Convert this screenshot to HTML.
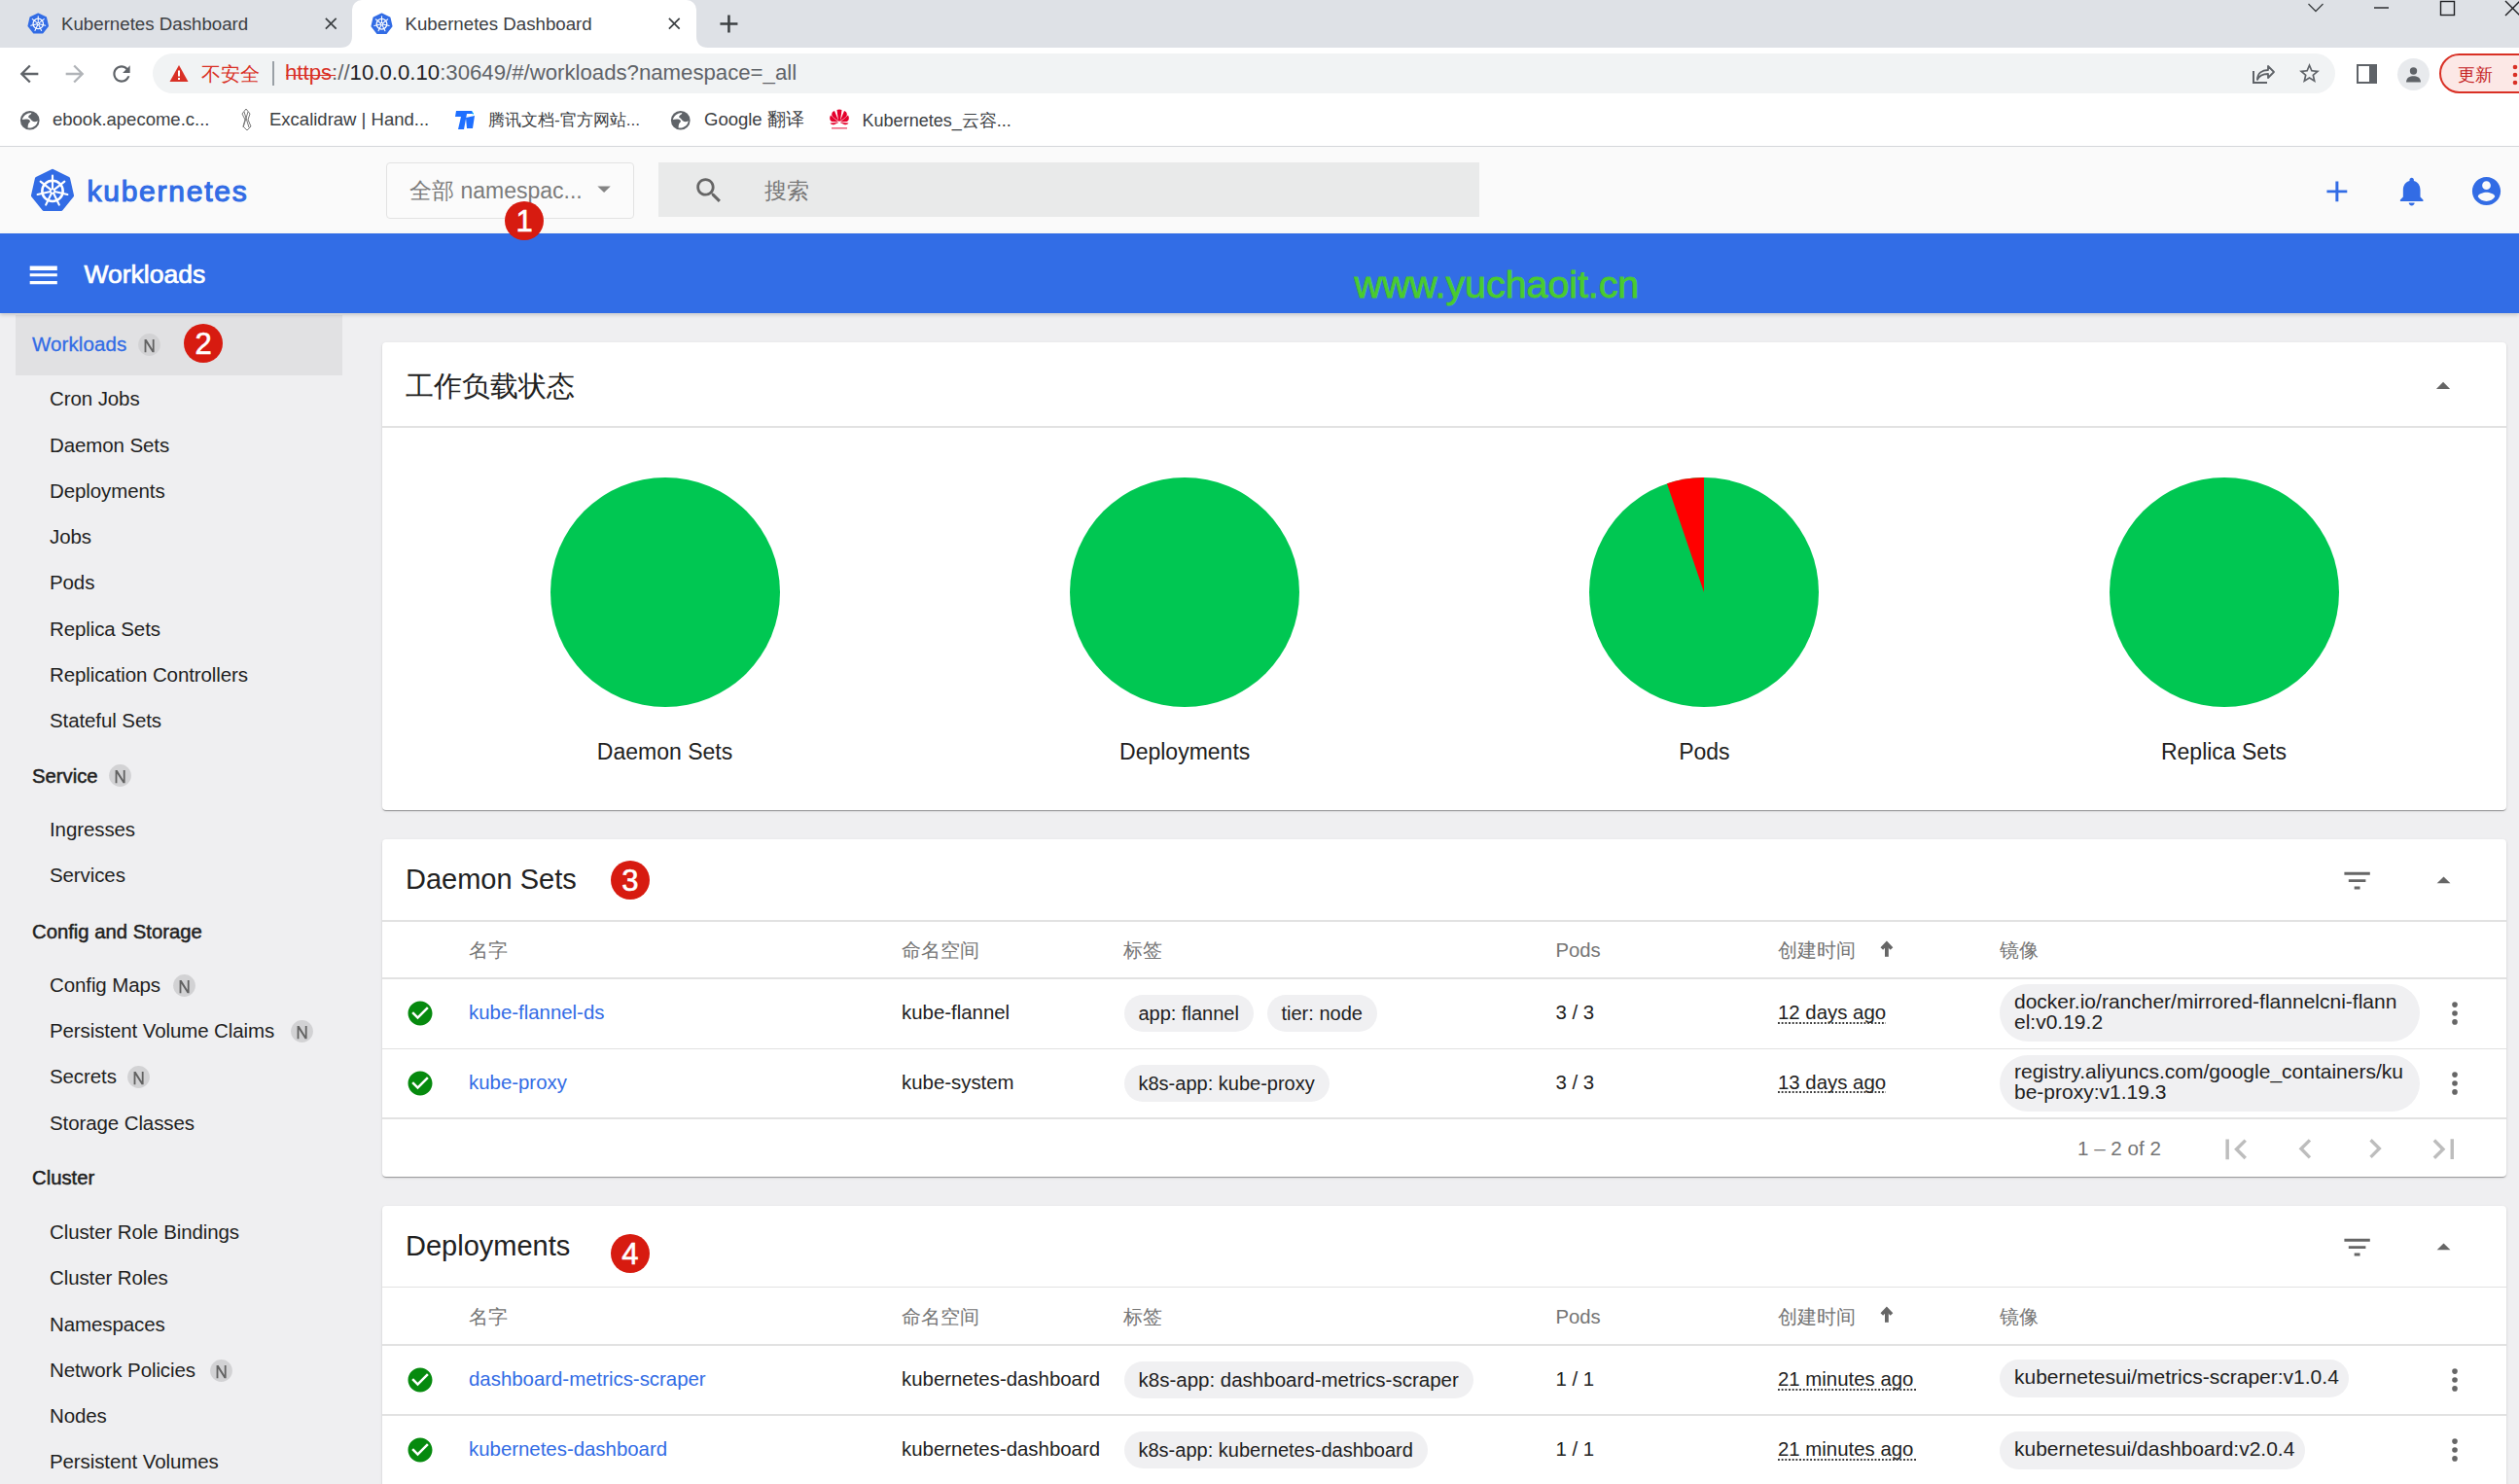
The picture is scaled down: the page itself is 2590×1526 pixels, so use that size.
<!DOCTYPE html>
<html><head><meta charset="utf-8"><title>Kubernetes Dashboard</title>
<style>
html,body{margin:0;padding:0;width:2590px;height:1526px;overflow:hidden;background:#efeff1}
body{position:relative;font-family:"Liberation Sans",sans-serif}
.r{position:absolute;display:block}
.t{position:absolute;white-space:nowrap;font-family:"Liberation Sans",sans-serif}
</style></head><body>
<div class="r" style="left:0px;top:0px;width:2590px;height:49px;background:#dee1e6"></div>
<div class="r" style="left:362px;top:0px;width:354px;height:49px;background:#fff;border-radius:10px 10px 0 0"></div>
<svg class="r" style="left:350px;top:37px" width="12" height="12" viewBox="0 0 12 12"><path d="M0 12 Q12 12 12 0 L12 12Z" fill="#fff"/></svg>
<svg class="r" style="left:716px;top:37px" width="12" height="12" viewBox="0 0 12 12"><path d="M12 12 Q0 12 0 0 L0 12Z" fill="#fff"/></svg>
<svg class="r" style="left:27.5px;top:13px;" width="22.5" height="22.5" viewBox="-4 -4 108 108"><polygon points="50.00,2.00 88.31,20.45 97.77,61.90 71.26,95.15 28.74,95.15 2.23,61.90 11.69,20.45" fill="#326ce5" stroke="#326ce5" stroke-width="8" stroke-linejoin="round"/><circle cx="50" cy="51" r="25" fill="none" stroke="#fff" stroke-width="6"/><line x1="50" y1="51" x2="50.00" y2="14.00" stroke="#fff" stroke-width="5" stroke-linecap="round"/><line x1="50" y1="51" x2="78.93" y2="27.93" stroke="#fff" stroke-width="5" stroke-linecap="round"/><line x1="50" y1="51" x2="86.07" y2="59.23" stroke="#fff" stroke-width="5" stroke-linecap="round"/><line x1="50" y1="51" x2="66.05" y2="84.34" stroke="#fff" stroke-width="5" stroke-linecap="round"/><line x1="50" y1="51" x2="33.95" y2="84.34" stroke="#fff" stroke-width="5" stroke-linecap="round"/><line x1="50" y1="51" x2="13.93" y2="59.23" stroke="#fff" stroke-width="5" stroke-linecap="round"/><line x1="50" y1="51" x2="21.07" y2="27.93" stroke="#fff" stroke-width="5" stroke-linecap="round"/><circle cx="50" cy="51" r="7" fill="#fff"/><circle cx="50" cy="51" r="3" fill="#326ce5"/></svg>
<div class="t" style="left:63px;top:16.37px;font-size:18.7px;line-height:18.7px;color:#3c4043;font-weight:400;">Kubernetes Dashboard</div>
<svg class="r" style="left:329.71px;top:13.71px;" width="20.57" height="20.57" viewBox="0 0 24 24"><path fill="#3c4043" d="M19 6.41L17.59 5 12 10.59 6.41 5 5 6.41 10.59 12 5 17.59 6.41 19 12 13.41 17.59 19 19 17.59 13.41 12z"/></svg>
<svg class="r" style="left:380.5px;top:13px;" width="23" height="23" viewBox="-4 -4 108 108"><polygon points="50.00,2.00 88.31,20.45 97.77,61.90 71.26,95.15 28.74,95.15 2.23,61.90 11.69,20.45" fill="#326ce5" stroke="#326ce5" stroke-width="8" stroke-linejoin="round"/><circle cx="50" cy="51" r="25" fill="none" stroke="#fff" stroke-width="6"/><line x1="50" y1="51" x2="50.00" y2="14.00" stroke="#fff" stroke-width="5" stroke-linecap="round"/><line x1="50" y1="51" x2="78.93" y2="27.93" stroke="#fff" stroke-width="5" stroke-linecap="round"/><line x1="50" y1="51" x2="86.07" y2="59.23" stroke="#fff" stroke-width="5" stroke-linecap="round"/><line x1="50" y1="51" x2="66.05" y2="84.34" stroke="#fff" stroke-width="5" stroke-linecap="round"/><line x1="50" y1="51" x2="33.95" y2="84.34" stroke="#fff" stroke-width="5" stroke-linecap="round"/><line x1="50" y1="51" x2="13.93" y2="59.23" stroke="#fff" stroke-width="5" stroke-linecap="round"/><line x1="50" y1="51" x2="21.07" y2="27.93" stroke="#fff" stroke-width="5" stroke-linecap="round"/><circle cx="50" cy="51" r="7" fill="#fff"/><circle cx="50" cy="51" r="3" fill="#326ce5"/></svg>
<div class="t" style="left:416.5px;top:15.97px;font-size:18.7px;line-height:18.7px;color:#3c4043;font-weight:400;">Kubernetes Dashboard</div>
<svg class="r" style="left:682.71px;top:13.71px;" width="20.57" height="20.57" viewBox="0 0 24 24"><path fill="#3c4043" d="M19 6.41L17.59 5 12 10.59 6.41 5 5 6.41 10.59 12 5 17.59 6.41 19 12 13.41 17.59 19 19 17.59 13.41 12z"/></svg>
<svg class="r" style="left:734.07px;top:8.57px;" width="30.86" height="30.86" viewBox="0 0 24 24"><path fill="#3c4043" d="M19 13h-6v6h-2v-6H5v-2h6V5h2v6h6v2z"/></svg>
<svg class="r" style="left:2370px;top:0px" width="220" height="20" viewBox="0 0 220 20"><polyline points="3.5,4 11,11.5 18.5,4" fill="none" stroke="#3c4043" stroke-width="1.3"/><line x1="71" y1="8" x2="86" y2="8" stroke="#202124" stroke-width="1.4"/><rect x="139.5" y="1.5" width="14" height="14" fill="none" stroke="#202124" stroke-width="1.4"/><line x1="206" y1="1" x2="221" y2="16" stroke="#202124" stroke-width="1.4"/><line x1="206" y1="16" x2="221" y2="1" stroke="#202124" stroke-width="1.4"/></svg>
<div class="r" style="left:0px;top:49px;width:2590px;height:101px;background:#fff"></div>
<svg class="r" style="left:16px;top:61.5px" width="28" height="28" viewBox="0 0 24 24"><path d="M20 11H7.83l5.59-5.59L12 4l-8 8 8 8 1.41-1.41L7.83 13H20v-2z" fill="#5f6368"/></svg>
<svg class="r" style="left:63px;top:61.5px" width="28" height="28" viewBox="0 0 24 24"><path d="M12 4l-1.41 1.41L16.17 11H4v2h12.17l-5.58 5.59L12 20l8-8z" fill="#b1b4b8"/></svg>
<svg class="r" style="left:112px;top:63px" width="26" height="26" viewBox="0 0 24 24"><path d="M17.65 6.35C16.2 4.9 14.21 4 12 4c-4.42 0-7.99 3.58-7.99 8s3.57 8 7.99 8c3.73 0 6.84-2.55 7.73-6h-2.08c-.82 2.33-3.04 4-5.65 4-3.31 0-6-2.69-6-6s2.69-6 6-6c1.66 0 3.14.69 4.22 1.78L13 11h7V4l-2.35 2.35z" fill="#5f6368"/></svg>
<div class="r" style="left:157px;top:55px;width:2244px;height:41px;background:#f1f3f4;border-radius:21px"></div>
<svg class="r" style="left:174px;top:66px" width="20" height="19" viewBox="0 0 20 19"><path d="M10 1 L19.5 18 L0.5 18 Z" fill="#d93025"/><rect x="9" y="6.5" width="2" height="6" fill="#fff"/><rect x="9" y="14" width="2" height="2" fill="#fff"/></svg>
<div class="t" style="left:207px;top:65.82px;font-size:20.3px;line-height:20.3px;color:#d93025;font-weight:400;">不安全</div>
<div class="r" style="left:280px;top:63px;width:1.5px;height:25px;background:#9aa0a6"></div>
<div class="r" style="left:294px;top:76.6px;width:50.5px;height:1.6px;background:#d93025;z-index:2"></div>
<div class="t" style="left:293px;top:63.61px;font-size:22.2px;line-height:22.2px;color:#202124;font-weight:400;"><span style="color:#d93025">https</span><span style="color:#5f6368">://</span><span style="color:#202124">10.0.0.10</span><span style="color:#5f6368">:30649/#/workloads?namespace=_all</span></div>
<svg class="r" style="left:2314px;top:64px" width="26" height="24" viewBox="0 0 26 24"><path d="M3 9 V21 H17" fill="none" stroke="#5f6368" stroke-width="2"/><path d="M7 18 C7 11 12 8 18 8 V4 L24 10 L18 16 V12 C13 12 9 13.5 7 18Z" fill="none" stroke="#5f6368" stroke-width="1.8" stroke-linejoin="round"/></svg>
<svg class="r" style="left:2362px;top:63px" width="25" height="25" viewBox="0 0 24 24"><path d="M22 9.24l-7.19-.62L12 2 9.19 8.63 2 9.24l5.46 4.73L5.82 21 12 17.27 18.18 21l-1.63-7.03L22 9.24zM12 15.4l-3.76 2.27 1-4.28-3.32-2.88 4.38-.38L12 6.1l1.71 4.04 4.38.38-3.32 2.88 1 4.28L12 15.4z" fill="#5f6368"/></svg>
<div class="r" style="left:2423px;top:65.5px;width:21px;height:20.5px;box-sizing:border-box;border:2.6px solid #5f6368;border-right-width:8px;background:#fff"></div>
<div class="r" style="left:2465px;top:60px;width:33px;height:33px;background:#e8eaed;border-radius:50%"></div>
<svg class="r" style="left:2471px;top:66px" width="21" height="21" viewBox="0 0 24 24"><circle cx="12" cy="8" r="4.2" fill="#5f6368"/><path d="M3.5 21 C3.5 15.5 8 14 12 14 C16 14 20.5 15.5 20.5 21Z" fill="#5f6368"/></svg>
<div class="r" style="left:2508px;top:55px;width:110px;height:41px;box-sizing:border-box;border:2px solid #d93025;border-radius:21px;background:#fce8e6"></div>
<div class="t" style="left:2527px;top:69.19px;font-size:17.5px;line-height:17.5px;color:#c5221f;font-weight:400;">更新</div>
<svg class="r" style="left:2582px;top:66px" width="8" height="22" viewBox="0 0 8 22"><circle cx="4" cy="3" r="2.3" fill="#d93025"/><circle cx="4" cy="11" r="2.3" fill="#d93025"/><circle cx="4" cy="19" r="2.3" fill="#d93025"/></svg>
<svg class="r" style="left:19.5px;top:112.5px;" width="21.5" height="21.5" viewBox="0 0 24 24"><circle cx="12" cy="12" r="11" fill="#5f6368"/><path d="M13.8 3.3 C8.8 3.2 4.3 6.6 3.2 11.2 C5.5 10.6 8.6 10.3 10.8 11.2 C12.6 12 12.6 13.6 11.4 14.6 C10.2 15.6 9.6 17.2 9.6 20.6 C15.2 21.6 20.4 17.8 20.9 12.6 C19 13.8 16.4 14 14.6 12.6 C13.2 11.6 12.8 10.2 11.6 9.6 C10.2 8.8 9.8 7.6 10.8 6.6 C11.8 5.6 13.6 5.2 13.8 3.3Z" fill="#fff"/></svg>
<div class="t" style="left:54px;top:114.44px;font-size:18.5px;line-height:18.5px;color:#3c4043;font-weight:400;">ebook.apecome.c...</div>
<svg class="r" style="left:246px;top:111px" width="14" height="24" viewBox="0 0 14 24"><path d="M7 1 L11 6 L9 12 L12 19 L8 23 L4 19 L6 12 L3 6Z M5 4 L10 20 M9 4 L4 20" fill="none" stroke="#777" stroke-width="1"/></svg>
<div class="t" style="left:277px;top:114.44px;font-size:18.5px;line-height:18.5px;color:#3c4043;font-weight:400;">Excalidraw | Hand...</div>
<svg class="r" style="left:465px;top:112px" width="24" height="22" viewBox="0 0 24 22"><path d="M4 2 H20 L22 5 H15 L12 21 H6 L9 8 H3Z" fill="#1e6fff"/><path d="M14 9 L23 7 L21 20 H15Z" fill="#1e6fff"/><path d="M20 2 L22 5 L21 6Z" fill="#00d4ff"/></svg>
<div class="t" style="left:502px;top:115.46px;font-size:17.3px;line-height:17.3px;color:#3c4043;font-weight:400;">腾讯文档-官方网站...</div>
<svg class="r" style="left:689px;top:112.5px;" width="21.5" height="21.5" viewBox="0 0 24 24"><circle cx="12" cy="12" r="11" fill="#5f6368"/><path d="M13.8 3.3 C8.8 3.2 4.3 6.6 3.2 11.2 C5.5 10.6 8.6 10.3 10.8 11.2 C12.6 12 12.6 13.6 11.4 14.6 C10.2 15.6 9.6 17.2 9.6 20.6 C15.2 21.6 20.4 17.8 20.9 12.6 C19 13.8 16.4 14 14.6 12.6 C13.2 11.6 12.8 10.2 11.6 9.6 C10.2 8.8 9.8 7.6 10.8 6.6 C11.8 5.6 13.6 5.2 13.8 3.3Z" fill="#fff"/></svg>
<div class="t" style="left:724px;top:114.44px;font-size:18.5px;line-height:18.5px;color:#3c4043;font-weight:400;">Google 翻译</div>
<svg class="r" style="left:851px;top:111px" width="24" height="24" viewBox="0 0 24 24"><g fill="#e4002b"><path d="M11.5 14 L7 3 C4 4 3.5 7 5 9Z"/><path d="M12.5 14 L17 3 C20 4 20.5 7 19 9Z"/><path d="M11 14.5 L3 7.5 C1.5 10 2 12.5 4 14Z"/><path d="M13 14.5 L21 7.5 C22.5 10 22 12.5 20 14Z"/><path d="M11.3 15 L2.5 15.5 C3.5 17 5 17.5 7 17Z"/><path d="M12.7 15 L21.5 15.5 C20.5 17 19 17.5 17 17Z"/><path d="M11 13.5 L9.5 2 C11 1.2 13 1.2 14.5 2 L13 13.5Z"/></g><rect x="4" y="20" width="16" height="1.6" fill="#e4002b" opacity=".6"/></svg>
<div class="t" style="left:886.6px;top:114.86px;font-size:18px;line-height:18px;color:#3c4043;font-weight:400;">Kubernetes_云容...</div>
<div class="r" style="left:0px;top:149.5px;width:2590px;height:1.5px;background:#d5d7da"></div>
<div class="r" style="left:0px;top:151px;width:2590px;height:89px;background:#fafafa"></div>
<svg class="r" style="left:31px;top:173px;" width="46" height="46" viewBox="-4 -4 108 108"><polygon points="50.00,2.00 88.31,20.45 97.77,61.90 71.26,95.15 28.74,95.15 2.23,61.90 11.69,20.45" fill="#326ce5" stroke="#326ce5" stroke-width="8" stroke-linejoin="round"/><circle cx="50" cy="51" r="25" fill="none" stroke="#fff" stroke-width="6"/><line x1="50" y1="51" x2="50.00" y2="14.00" stroke="#fff" stroke-width="5" stroke-linecap="round"/><line x1="50" y1="51" x2="78.93" y2="27.93" stroke="#fff" stroke-width="5" stroke-linecap="round"/><line x1="50" y1="51" x2="86.07" y2="59.23" stroke="#fff" stroke-width="5" stroke-linecap="round"/><line x1="50" y1="51" x2="66.05" y2="84.34" stroke="#fff" stroke-width="5" stroke-linecap="round"/><line x1="50" y1="51" x2="33.95" y2="84.34" stroke="#fff" stroke-width="5" stroke-linecap="round"/><line x1="50" y1="51" x2="13.93" y2="59.23" stroke="#fff" stroke-width="5" stroke-linecap="round"/><line x1="50" y1="51" x2="21.07" y2="27.93" stroke="#fff" stroke-width="5" stroke-linecap="round"/><circle cx="50" cy="51" r="7" fill="#fff"/><circle cx="50" cy="51" r="3" fill="#326ce5"/></svg>
<div class="t" style="left:89.5px;top:181.50px;font-size:30px;line-height:30px;color:#326ce5;font-weight:400;letter-spacing:1.75px;-webkit-text-stroke:1.1px #326ce5">kubernetes</div>
<div class="r" style="left:397px;top:167px;width:255px;height:58px;box-sizing:border-box;border:1.5px solid #e3e3e3;border-radius:4px;background:#fbfbfb"></div>
<div class="t" style="left:421px;top:185.13px;font-size:23px;line-height:23px;color:#7b7b7b;font-weight:400;">全部 namespac...</div>
<svg class="r" style="left:604.62px;top:178.3px;" width="32.16" height="32.16" viewBox="0 0 24 24"><path fill="#848484" d="M7 10l5 5 5-5z"/></svg>
<div class="r" style="left:677px;top:167.2px;width:844px;height:56px;background:#e9eaea"></div>
<svg class="r" style="left:712.26px;top:179.46px;" width="33.89" height="33.89" viewBox="0 0 24 24"><path fill="#666" d="M15.5 14h-.79l-.28-.27C15.41 12.59 16 11.11 16 9.5 16 5.91 13.09 3 9.5 3S3 5.91 3 9.5 5.91 16 9.5 16c1.61 0 3.090-.59 4.23-1.57l.27.28v.79l5 4.99L20.49 19l-4.99-5zm-6 0C7.01 14 5 11.99 5 9.5S7.01 5 9.5 5 14 7.01 14 9.5 11.99 14 9.5 14z"/></svg>
<div class="t" style="left:786px;top:185.13px;font-size:23px;line-height:23px;color:#797979;font-weight:400;">搜索</div>
<svg class="r" style="left:2385.15px;top:179.25px;" width="35.74" height="35.74" viewBox="0 0 24 24"><path fill="#326ce5" d="M19 13h-6v6h-2v-6H5v-2h6V5h2v6h6v2z"/></svg>
<svg class="r" style="left:2461.91px;top:179.12px;" width="35.35" height="35.35" viewBox="0 0 24 24"><path fill="#326ce5" d="M12 22c1.1 0 2-.9 2-2h-4c0 1.1.89 2 2 2zm6-6v-5c0-3.07-1.64-5.64-4.5-6.32V4c0-.83-.67-1.5-1.5-1.5s-1.5.67-1.5 1.5v.68C7.63 5.36 6 7.92 6 11v5l-2 2v1h16v-1l-2-2z"/></svg>
<svg class="r" style="left:2539.08px;top:178.88px;" width="35.04" height="35.04" viewBox="0 0 24 24"><path fill="#326ce5" d="M12 2C6.48 2 2 6.48 2 12s4.48 10 10 10 10-4.48 10-10S17.52 2 12 2zm0 3c1.66 0 3 1.34 3 3s-1.34 3-3 3-3-1.34-3-3 1.34-3 3-3zm0 14.2c-2.5 0-4.71-1.28-6-3.22.03-1.99 4-3.08 6-3.08 1.99 0 5.97 1.09 6 3.08-1.29 1.94-3.5 3.22-6 3.22z"/></svg>
<div class="r" style="left:0px;top:240px;width:2590px;height:82px;background:#326de6;box-shadow:0 2px 4px rgba(0,0,0,.16);z-index:2"></div>
<svg class="r" style="left:26.01px;top:264.02px;z-index:3" width="37.5" height="37.5" viewBox="0 0 24 24"><path fill="#fff" d="M3 18h18v-2H3v2zm0-5h18v-2H3v2zm0-6v2h18V6H3z"/></svg>
<div class="t" style="left:86.5px;top:269.17px;font-size:26.5px;line-height:26.5px;color:#fff;font-weight:400;-webkit-text-stroke:0.7px #fff;z-index:3">Workloads</div>
<div class="t" style="left:1392.5px;top:272.56px;font-size:39.5px;line-height:39.5px;color:#4acb2f;font-weight:400;letter-spacing:-0.1px;-webkit-text-stroke:0.8px #4acb2f;z-index:3">www.yuchaoit.cn</div>
<div class="r" style="left:15.5px;top:323.5px;width:336.5px;height:62.5px;background:#e1e1e3"></div>
<div class="t" style="left:33px;top:344.45px;font-size:20.5px;line-height:20.5px;color:#326ce5;font-weight:400;letter-spacing:0.1px;-webkit-text-stroke:0.3px #326ce5">Workloads</div>
<svg class="r" style="left:142px;top:343px" width="23" height="23" viewBox="0 0 23 23"><circle cx="11.5" cy="11.5" r="11.4" fill="#d2d2d4"/><path d="M6.6 19.3V6.1H8.6L14.8 15.9V6.1H16.6V19.3H14.6L8.4 9.5V19.3Z" fill="#626262"/></svg>
<div class="t" style="left:189px;top:333px;width:40px;height:40px;border-radius:50%;background:#d71b10;text-align:center;line-height:41px;font-size:31px;color:#fff;-webkit-text-stroke:0.6px #fff;z-index:3">2</div>
<div class="t" style="left:51px;top:400.35px;font-size:20.5px;line-height:20.5px;color:#1f1f1f;font-weight:400;letter-spacing:-0.1px">Cron Jobs</div>
<div class="t" style="left:51px;top:447.65px;font-size:20.5px;line-height:20.5px;color:#1f1f1f;font-weight:400;letter-spacing:-0.1px">Daemon Sets</div>
<div class="t" style="left:51px;top:494.85px;font-size:20.5px;line-height:20.5px;color:#1f1f1f;font-weight:400;letter-spacing:-0.1px">Deployments</div>
<div class="t" style="left:51px;top:542.05px;font-size:20.5px;line-height:20.5px;color:#1f1f1f;font-weight:400;letter-spacing:-0.1px">Jobs</div>
<div class="t" style="left:51px;top:589.25px;font-size:20.5px;line-height:20.5px;color:#1f1f1f;font-weight:400;letter-spacing:-0.1px">Pods</div>
<div class="t" style="left:51px;top:636.55px;font-size:20.5px;line-height:20.5px;color:#1f1f1f;font-weight:400;letter-spacing:-0.1px">Replica Sets</div>
<div class="t" style="left:51px;top:683.75px;font-size:20.5px;line-height:20.5px;color:#1f1f1f;font-weight:400;letter-spacing:-0.1px">Replication Controllers</div>
<div class="t" style="left:51px;top:731.15px;font-size:20.5px;line-height:20.5px;color:#1f1f1f;font-weight:400;letter-spacing:-0.1px">Stateful Sets</div>
<div class="t" style="left:51px;top:843.05px;font-size:20.5px;line-height:20.5px;color:#1f1f1f;font-weight:400;letter-spacing:-0.1px">Ingresses</div>
<div class="t" style="left:51px;top:890.25px;font-size:20.5px;line-height:20.5px;color:#1f1f1f;font-weight:400;letter-spacing:-0.1px">Services</div>
<div class="t" style="left:51px;top:1002.95px;font-size:20.5px;line-height:20.5px;color:#1f1f1f;font-weight:400;letter-spacing:-0.1px">Config Maps</div>
<div class="t" style="left:51px;top:1050.25px;font-size:20.5px;line-height:20.5px;color:#1f1f1f;font-weight:400;letter-spacing:-0.1px">Persistent Volume Claims</div>
<div class="t" style="left:51px;top:1097.45px;font-size:20.5px;line-height:20.5px;color:#1f1f1f;font-weight:400;letter-spacing:-0.1px">Secrets</div>
<div class="t" style="left:51px;top:1144.65px;font-size:20.5px;line-height:20.5px;color:#1f1f1f;font-weight:400;letter-spacing:-0.1px">Storage Classes</div>
<div class="t" style="left:51px;top:1257.15px;font-size:20.5px;line-height:20.5px;color:#1f1f1f;font-weight:400;letter-spacing:-0.1px">Cluster Role Bindings</div>
<div class="t" style="left:51px;top:1304.45px;font-size:20.5px;line-height:20.5px;color:#1f1f1f;font-weight:400;letter-spacing:-0.1px">Cluster Roles</div>
<div class="t" style="left:51px;top:1351.65px;font-size:20.5px;line-height:20.5px;color:#1f1f1f;font-weight:400;letter-spacing:-0.1px">Namespaces</div>
<div class="t" style="left:51px;top:1398.95px;font-size:20.5px;line-height:20.5px;color:#1f1f1f;font-weight:400;letter-spacing:-0.1px">Network Policies</div>
<div class="t" style="left:51px;top:1446.15px;font-size:20.5px;line-height:20.5px;color:#1f1f1f;font-weight:400;letter-spacing:-0.1px">Nodes</div>
<div class="t" style="left:51px;top:1493.25px;font-size:20.5px;line-height:20.5px;color:#1f1f1f;font-weight:400;letter-spacing:-0.1px">Persistent Volumes</div>
<div class="t" style="left:33px;top:787.82px;font-size:20.3px;line-height:20.3px;color:#1f1f1f;font-weight:400;-webkit-text-stroke:0.5px #1f1f1f">Service</div>
<div class="t" style="left:33px;top:947.52px;font-size:20.3px;line-height:20.3px;color:#1f1f1f;font-weight:400;-webkit-text-stroke:0.5px #1f1f1f">Config and Storage</div>
<div class="t" style="left:33px;top:1201.32px;font-size:20.3px;line-height:20.3px;color:#1f1f1f;font-weight:400;-webkit-text-stroke:0.5px #1f1f1f">Cluster</div>
<svg class="r" style="left:112px;top:786px" width="23" height="23" viewBox="0 0 23 23"><circle cx="11.5" cy="11.5" r="11.4" fill="#d2d2d4"/><path d="M6.6 19.3V6.1H8.6L14.8 15.9V6.1H16.6V19.3H14.6L8.4 9.5V19.3Z" fill="#626262"/></svg>
<svg class="r" style="left:177.8px;top:1001.6px" width="23" height="23" viewBox="0 0 23 23"><circle cx="11.5" cy="11.5" r="11.4" fill="#d2d2d4"/><path d="M6.6 19.3V6.1H8.6L14.8 15.9V6.1H16.6V19.3H14.6L8.4 9.5V19.3Z" fill="#626262"/></svg>
<svg class="r" style="left:298.7px;top:1048.8px" width="23" height="23" viewBox="0 0 23 23"><circle cx="11.5" cy="11.5" r="11.4" fill="#d2d2d4"/><path d="M6.6 19.3V6.1H8.6L14.8 15.9V6.1H16.6V19.3H14.6L8.4 9.5V19.3Z" fill="#626262"/></svg>
<svg class="r" style="left:131.3px;top:1096px" width="23" height="23" viewBox="0 0 23 23"><circle cx="11.5" cy="11.5" r="11.4" fill="#d2d2d4"/><path d="M6.6 19.3V6.1H8.6L14.8 15.9V6.1H16.6V19.3H14.6L8.4 9.5V19.3Z" fill="#626262"/></svg>
<svg class="r" style="left:215.6px;top:1397.6px" width="23" height="23" viewBox="0 0 23 23"><circle cx="11.5" cy="11.5" r="11.4" fill="#d2d2d4"/><path d="M6.6 19.3V6.1H8.6L14.8 15.9V6.1H16.6V19.3H14.6L8.4 9.5V19.3Z" fill="#626262"/></svg>
<div class="r" style="left:393px;top:352px;width:2184px;height:481px;background:#fff;border-radius:4px;box-shadow:0 2px 1px -1px rgba(0,0,0,.2),0 1px 1px 0 rgba(0,0,0,.14),0 1px 3px 0 rgba(0,0,0,.12)"></div>
<div class="t" style="left:417px;top:383.24px;font-size:29.25px;line-height:29.25px;color:#212121;font-weight:400;">工作负载状态</div>
<svg class="r" style="left:2495.06px;top:379.92px;" width="34.08" height="34.08" viewBox="0 0 24 24"><path fill="#666" d="M7 14l5-5 5 5z"/></svg>
<div class="r" style="left:393px;top:438px;width:2184px;height:1.5px;background:#e2e2e2"></div>
<svg class="r" style="left:565.5px;top:491.20000000000005px;" width="236" height="236" viewBox="0 0 236 236"><circle cx="118" cy="118" r="118" fill="#00c752"/></svg>
<div class="t" style="left:533.5px;width:300px;text-align:center;top:761.53px;font-size:23px;line-height:23px;color:#212121">Daemon Sets</div>
<svg class="r" style="left:1100.2px;top:491.20000000000005px;" width="236" height="236" viewBox="0 0 236 236"><circle cx="118" cy="118" r="118" fill="#00c752"/></svg>
<div class="t" style="left:1068.2px;width:300px;text-align:center;top:761.53px;font-size:23px;line-height:23px;color:#212121">Deployments</div>
<svg class="r" style="left:1634.4px;top:491.20000000000005px;" width="236" height="236" viewBox="0 0 236 236"><circle cx="118" cy="118" r="118" fill="#00c752"/><path d="M118 118 L118 0 A118 118 0 0 0 79.97 6.30 Z" fill="#ff0000"/></svg>
<div class="t" style="left:1602.4px;width:300px;text-align:center;top:761.53px;font-size:23px;line-height:23px;color:#212121">Pods</div>
<svg class="r" style="left:2168.5px;top:491.20000000000005px;" width="236" height="236" viewBox="0 0 236 236"><circle cx="118" cy="118" r="118" fill="#00c752"/></svg>
<div class="t" style="left:2136.5px;width:300px;text-align:center;top:761.53px;font-size:23px;line-height:23px;color:#212121">Replica Sets</div>
<div class="r" style="left:393px;top:863.3px;width:2184px;height:346.4000000000001px;background:#fff;border-radius:4px;box-shadow:0 2px 1px -1px rgba(0,0,0,.2),0 1px 1px 0 rgba(0,0,0,.14),0 1px 3px 0 rgba(0,0,0,.12)"></div>
<div class="t" style="left:417px;top:889.95px;font-size:29px;line-height:29px;color:#212121;font-weight:400;">Daemon Sets</div><div class="t" style="left:627.8px;top:884.9px;width:40px;height:40px;border-radius:50%;background:#d71b10;text-align:center;line-height:41px;font-size:31px;color:#fff;-webkit-text-stroke:0.6px #fff;z-index:3">3</div><svg class="r" style="left:2406.0px;top:888.2px;" width="35.2" height="35.2" viewBox="0 0 24 24"><path fill="#666" d="M10 18h4v-2h-4v2zM3 6v2h18V6H3zm3 7h12v-2H6v2z"/></svg><svg class="r" style="left:2495.74px;top:889.28px;" width="33.12" height="33.12" viewBox="0 0 24 24"><path fill="#666" d="M7 14l5-5 5 5z"/></svg>
<div class="r" style="left:393px;top:946.0px;width:2184px;height:1.5px;background:#e2e2e2"></div><div class="t" style="left:482px;top:966.92px;font-size:20.3px;line-height:20.3px;color:#757575;font-weight:400;">名字</div><div class="t" style="left:927px;top:966.92px;font-size:20.3px;line-height:20.3px;color:#757575;font-weight:400;">命名空间</div><div class="t" style="left:1155px;top:966.92px;font-size:20.3px;line-height:20.3px;color:#757575;font-weight:400;">标签</div><div class="t" style="left:1599.5px;top:966.92px;font-size:20.3px;line-height:20.3px;color:#757575;font-weight:400;">Pods</div><div class="t" style="left:1828px;top:966.92px;font-size:20.3px;line-height:20.3px;color:#757575;font-weight:400;">创建时间</div><div class="t" style="left:2056px;top:966.92px;font-size:20.3px;line-height:20.3px;color:#757575;font-weight:400;">镜像</div><svg class="r" style="left:1930px;top:966.50px" width="20" height="18" viewBox="0 0 20 18"><rect x="8" y="3" width="3.8" height="13.8" fill="#666"/><polyline points="4.8,8.6 9.9,3.2 15,8.6" fill="none" stroke="#666" stroke-width="3.6" stroke-linejoin="miter"/></svg><div class="r" style="left:393px;top:1005.3px;width:2184px;height:1.5px;background:#e2e2e2"></div>
<svg class="r" style="left:416.5px;top:1027.3px;" width="30.0" height="30.0" viewBox="0 0 24 24"><path fill="#068a0e" d="M12 2C6.48 2 2 6.48 2 12s4.48 10 10 10 10-4.48 10-10S17.520 2 12 2zm-2 15l-5-5 1.41-1.41L10 14.17l7.59-7.59L19 8l-9 9z"/></svg><div class="t" style="left:482px;top:1031.03px;font-size:20.4px;line-height:20.4px;color:#326ce5;font-weight:400;">kube-flannel-ds</div><div class="t" style="left:927px;top:1031.03px;font-size:20.4px;line-height:20.4px;color:#212121;font-weight:400;">kube-flannel</div><div class="t" style="left:1155.5px;top:1023.30px;height:38px;line-height:38px;padding:0 15px;background:#f0f0f2;border-radius:19.0px;font-size:20px;color:#212121">app: flannel</div><div class="t" style="left:1302.5px;top:1023.30px;height:38px;line-height:38px;padding:0 15px;background:#f0f0f2;border-radius:19.0px;font-size:20px;color:#212121">tier: node</div><div class="t" style="left:1599.5px;top:1031.03px;font-size:20.4px;line-height:20.4px;color:#212121;font-weight:400;">3 / 3</div><div class="t" style="left:1828px;top:1031.03px;font-size:20.4px;line-height:20.4px;color:#212121;font-weight:400;">12 days ago</div><div class="r" style="left:1828px;top:1050.5px;width:110.5px;height:2px;background-image:linear-gradient(to right,#3a3a3a 55%,rgba(0,0,0,0) 55%);background-size:3.7px 2px"></div><div class="t" style="left:2056px;top:1012.2px;width:431.6px;height:58.8px;box-sizing:border-box;padding:6.60px 0 0 15px;line-height:21px;background:#f0f0f2;border-radius:29.4px;font-size:21px;color:#212121;white-space:nowrap">docker.io/rancher/mirrored-flannelcni-flann<br>el:v0.19.2</div><svg class="r" style="left:2518px;top:1027.30px" width="12" height="30" viewBox="0 0 12 30"><circle cx="6" cy="6.1" r="2.8" fill="#666"/><circle cx="6" cy="15" r="2.8" fill="#666"/><circle cx="6" cy="23.9" r="2.8" fill="#666"/></svg>
<div class="r" style="left:393px;top:1077.5px;width:2184px;height:1.5px;background:#e2e2e2"></div>
<svg class="r" style="left:416.5px;top:1098.8px;" width="30.0" height="30.0" viewBox="0 0 24 24"><path fill="#068a0e" d="M12 2C6.48 2 2 6.48 2 12s4.48 10 10 10 10-4.48 10-10S17.520 2 12 2zm-2 15l-5-5 1.41-1.41L10 14.17l7.59-7.59L19 8l-9 9z"/></svg><div class="t" style="left:482px;top:1102.53px;font-size:20.4px;line-height:20.4px;color:#326ce5;font-weight:400;">kube-proxy</div><div class="t" style="left:927px;top:1102.53px;font-size:20.4px;line-height:20.4px;color:#212121;font-weight:400;">kube-system</div><div class="t" style="left:1155.5px;top:1094.80px;height:38px;line-height:38px;padding:0 15px;background:#f0f0f2;border-radius:19.0px;font-size:20px;color:#212121">k8s-app: kube-proxy</div><div class="t" style="left:1599.5px;top:1102.53px;font-size:20.4px;line-height:20.4px;color:#212121;font-weight:400;">3 / 3</div><div class="t" style="left:1828px;top:1102.53px;font-size:20.4px;line-height:20.4px;color:#212121;font-weight:400;">13 days ago</div><div class="r" style="left:1828px;top:1122.0px;width:110.5px;height:2px;background-image:linear-gradient(to right,#3a3a3a 55%,rgba(0,0,0,0) 55%);background-size:3.7px 2px"></div><div class="t" style="left:2056px;top:1084.5px;width:431.6px;height:58.8px;box-sizing:border-box;padding:6.60px 0 0 15px;line-height:21px;background:#f0f0f2;border-radius:29.4px;font-size:21px;color:#212121;white-space:nowrap">registry.aliyuncs.com/google_containers/ku<br>be-proxy:v1.19.3</div><svg class="r" style="left:2518px;top:1098.80px" width="12" height="30" viewBox="0 0 12 30"><circle cx="6" cy="6.1" r="2.8" fill="#666"/><circle cx="6" cy="15" r="2.8" fill="#666"/><circle cx="6" cy="23.9" r="2.8" fill="#666"/></svg>
<div class="r" style="left:393px;top:1149px;width:2184px;height:1.5px;background:#e2e2e2"></div>
<div class="t" style="left:2136px;top:1170.56px;font-size:20.6px;line-height:20.6px;color:#757575;font-weight:400;">1 – 2 of 2</div>
<svg class="r" style="left:2278.38px;top:1161.08px;" width="41.68" height="41.68" viewBox="0 0 24 24"><path fill="#bdbdbd" d="M18.41 16.59L13.82 12l4.59-4.59L17 6l-6 6 6 6zM6 6h2v12H6z"/></svg>
<svg class="r" style="left:2350.42px;top:1161.31px;" width="40.74" height="40.74" viewBox="0 0 24 24"><path fill="#bdbdbd" d="M15.41 7.41L14 6l-6 6 6 6 1.41-1.41L10.83 12z"/></svg>
<svg class="r" style="left:2421.55px;top:1161.48px;" width="40.1" height="40.1" viewBox="0 0 24 24"><path fill="#bdbdbd" d="M10 6L8.59 7.41 13.17 12l-4.58 4.59L10 18l6-6z"/></svg>
<svg class="r" style="left:2491.88px;top:1161.18px;" width="41.29" height="41.29" viewBox="0 0 24 24"><path fill="#bdbdbd" d="M5.59 7.41L10.18 12l-4.59 4.59L7 18l6-6-6-6zM16 6h2v12h-2z"/></svg>
<div class="r" style="left:393px;top:1240px;width:2184px;height:300px;background:#fff;border-radius:4px;box-shadow:0 2px 1px -1px rgba(0,0,0,.2),0 1px 1px 0 rgba(0,0,0,.14),0 1px 3px 0 rgba(0,0,0,.12)"></div>
<div class="t" style="left:417px;top:1266.65px;font-size:29px;line-height:29px;color:#212121;font-weight:400;">Deployments</div><div class="t" style="left:627.8px;top:1269px;width:40px;height:40px;border-radius:50%;background:#d71b10;text-align:center;line-height:41px;font-size:31px;color:#fff;-webkit-text-stroke:0.6px #fff;z-index:3">4</div><svg class="r" style="left:2406.0px;top:1264.9px;" width="35.2" height="35.2" viewBox="0 0 24 24"><path fill="#666" d="M10 18h4v-2h-4v2zM3 6v2h18V6H3zm3 7h12v-2H6v2z"/></svg><svg class="r" style="left:2495.74px;top:1265.98px;" width="33.12" height="33.12" viewBox="0 0 24 24"><path fill="#666" d="M7 14l5-5 5 5z"/></svg>
<div class="r" style="left:393px;top:1322.7px;width:2184px;height:1.5px;background:#e2e2e2"></div><div class="t" style="left:482px;top:1343.62px;font-size:20.3px;line-height:20.3px;color:#757575;font-weight:400;">名字</div><div class="t" style="left:927px;top:1343.62px;font-size:20.3px;line-height:20.3px;color:#757575;font-weight:400;">命名空间</div><div class="t" style="left:1155px;top:1343.62px;font-size:20.3px;line-height:20.3px;color:#757575;font-weight:400;">标签</div><div class="t" style="left:1599.5px;top:1343.62px;font-size:20.3px;line-height:20.3px;color:#757575;font-weight:400;">Pods</div><div class="t" style="left:1828px;top:1343.62px;font-size:20.3px;line-height:20.3px;color:#757575;font-weight:400;">创建时间</div><div class="t" style="left:2056px;top:1343.62px;font-size:20.3px;line-height:20.3px;color:#757575;font-weight:400;">镜像</div><svg class="r" style="left:1930px;top:1343.20px" width="20" height="18" viewBox="0 0 20 18"><rect x="8" y="3" width="3.8" height="13.8" fill="#666"/><polyline points="4.8,8.6 9.9,3.2 15,8.6" fill="none" stroke="#666" stroke-width="3.6" stroke-linejoin="miter"/></svg><div class="r" style="left:393px;top:1382px;width:2184px;height:1.5px;background:#e2e2e2"></div>
<svg class="r" style="left:416.5px;top:1404.3px;" width="30.0" height="30.0" viewBox="0 0 24 24"><path fill="#068a0e" d="M12 2C6.48 2 2 6.48 2 12s4.48 10 10 10 10-4.48 10-10S17.520 2 12 2zm-2 15l-5-5 1.41-1.41L10 14.17l7.59-7.59L19 8l-9 9z"/></svg><div class="t" style="left:482px;top:1408.03px;font-size:20.4px;line-height:20.4px;color:#326ce5;font-weight:400;">dashboard-metrics-scraper</div><div class="t" style="left:927px;top:1408.03px;font-size:20.4px;line-height:20.4px;color:#212121;font-weight:400;">kubernetes-dashboard</div><div class="t" style="left:1155.5px;top:1400.30px;height:38px;line-height:38px;padding:0 15px;background:#f0f0f2;border-radius:19.0px;font-size:20.5px;color:#212121">k8s-app: dashboard-metrics-scraper</div><div class="t" style="left:1599.5px;top:1408.03px;font-size:20.4px;line-height:20.4px;color:#212121;font-weight:400;">1 / 1</div><div class="t" style="left:1828px;top:1408.03px;font-size:20.4px;line-height:20.4px;color:#212121;font-weight:400;">21 minutes ago</div><div class="r" style="left:1828px;top:1427.5px;width:141.5px;height:2px;background-image:linear-gradient(to right,#3a3a3a 55%,rgba(0,0,0,0) 55%);background-size:3.7px 2px"></div><div class="t" style="left:2056px;top:1398px;width:359px;height:39px;box-sizing:border-box;padding:7.20px 0 0 15px;line-height:21px;background:#f0f0f2;border-radius:19.5px;font-size:21px;color:#212121;white-space:nowrap">kubernetesui/metrics-scraper:v1.0.4</div><svg class="r" style="left:2518px;top:1404.30px" width="12" height="30" viewBox="0 0 12 30"><circle cx="6" cy="6.1" r="2.8" fill="#666"/><circle cx="6" cy="15" r="2.8" fill="#666"/><circle cx="6" cy="23.9" r="2.8" fill="#666"/></svg>
<div class="r" style="left:393px;top:1454px;width:2184px;height:1.5px;background:#e2e2e2"></div>
<svg class="r" style="left:416.5px;top:1476.3px;" width="30.0" height="30.0" viewBox="0 0 24 24"><path fill="#068a0e" d="M12 2C6.48 2 2 6.48 2 12s4.48 10 10 10 10-4.48 10-10S17.520 2 12 2zm-2 15l-5-5 1.41-1.41L10 14.17l7.59-7.59L19 8l-9 9z"/></svg><div class="t" style="left:482px;top:1480.03px;font-size:20.4px;line-height:20.4px;color:#326ce5;font-weight:400;">kubernetes-dashboard</div><div class="t" style="left:927px;top:1480.03px;font-size:20.4px;line-height:20.4px;color:#212121;font-weight:400;">kubernetes-dashboard</div><div class="t" style="left:1155.5px;top:1472.30px;height:38px;line-height:38px;padding:0 15px;background:#f0f0f2;border-radius:19.0px;font-size:20px;color:#212121">k8s-app: kubernetes-dashboard</div><div class="t" style="left:1599.5px;top:1480.03px;font-size:20.4px;line-height:20.4px;color:#212121;font-weight:400;">1 / 1</div><div class="t" style="left:1828px;top:1480.03px;font-size:20.4px;line-height:20.4px;color:#212121;font-weight:400;">21 minutes ago</div><div class="r" style="left:1828px;top:1499.5px;width:141.5px;height:2px;background-image:linear-gradient(to right,#3a3a3a 55%,rgba(0,0,0,0) 55%);background-size:3.7px 2px"></div><div class="t" style="left:2056px;top:1472px;width:314px;height:39px;box-sizing:border-box;padding:7.20px 0 0 15px;line-height:21px;background:#f0f0f2;border-radius:19.5px;font-size:21px;color:#212121;white-space:nowrap">kubernetesui/dashboard:v2.0.4</div><svg class="r" style="left:2518px;top:1476.30px" width="12" height="30" viewBox="0 0 12 30"><circle cx="6" cy="6.1" r="2.8" fill="#666"/><circle cx="6" cy="15" r="2.8" fill="#666"/><circle cx="6" cy="23.9" r="2.8" fill="#666"/></svg>
<div class="t" style="left:519px;top:206.6px;width:40px;height:40px;border-radius:50%;background:#d71b10;text-align:center;line-height:41px;font-size:31px;color:#fff;-webkit-text-stroke:0.6px #fff;z-index:3">1</div>
</body></html>
